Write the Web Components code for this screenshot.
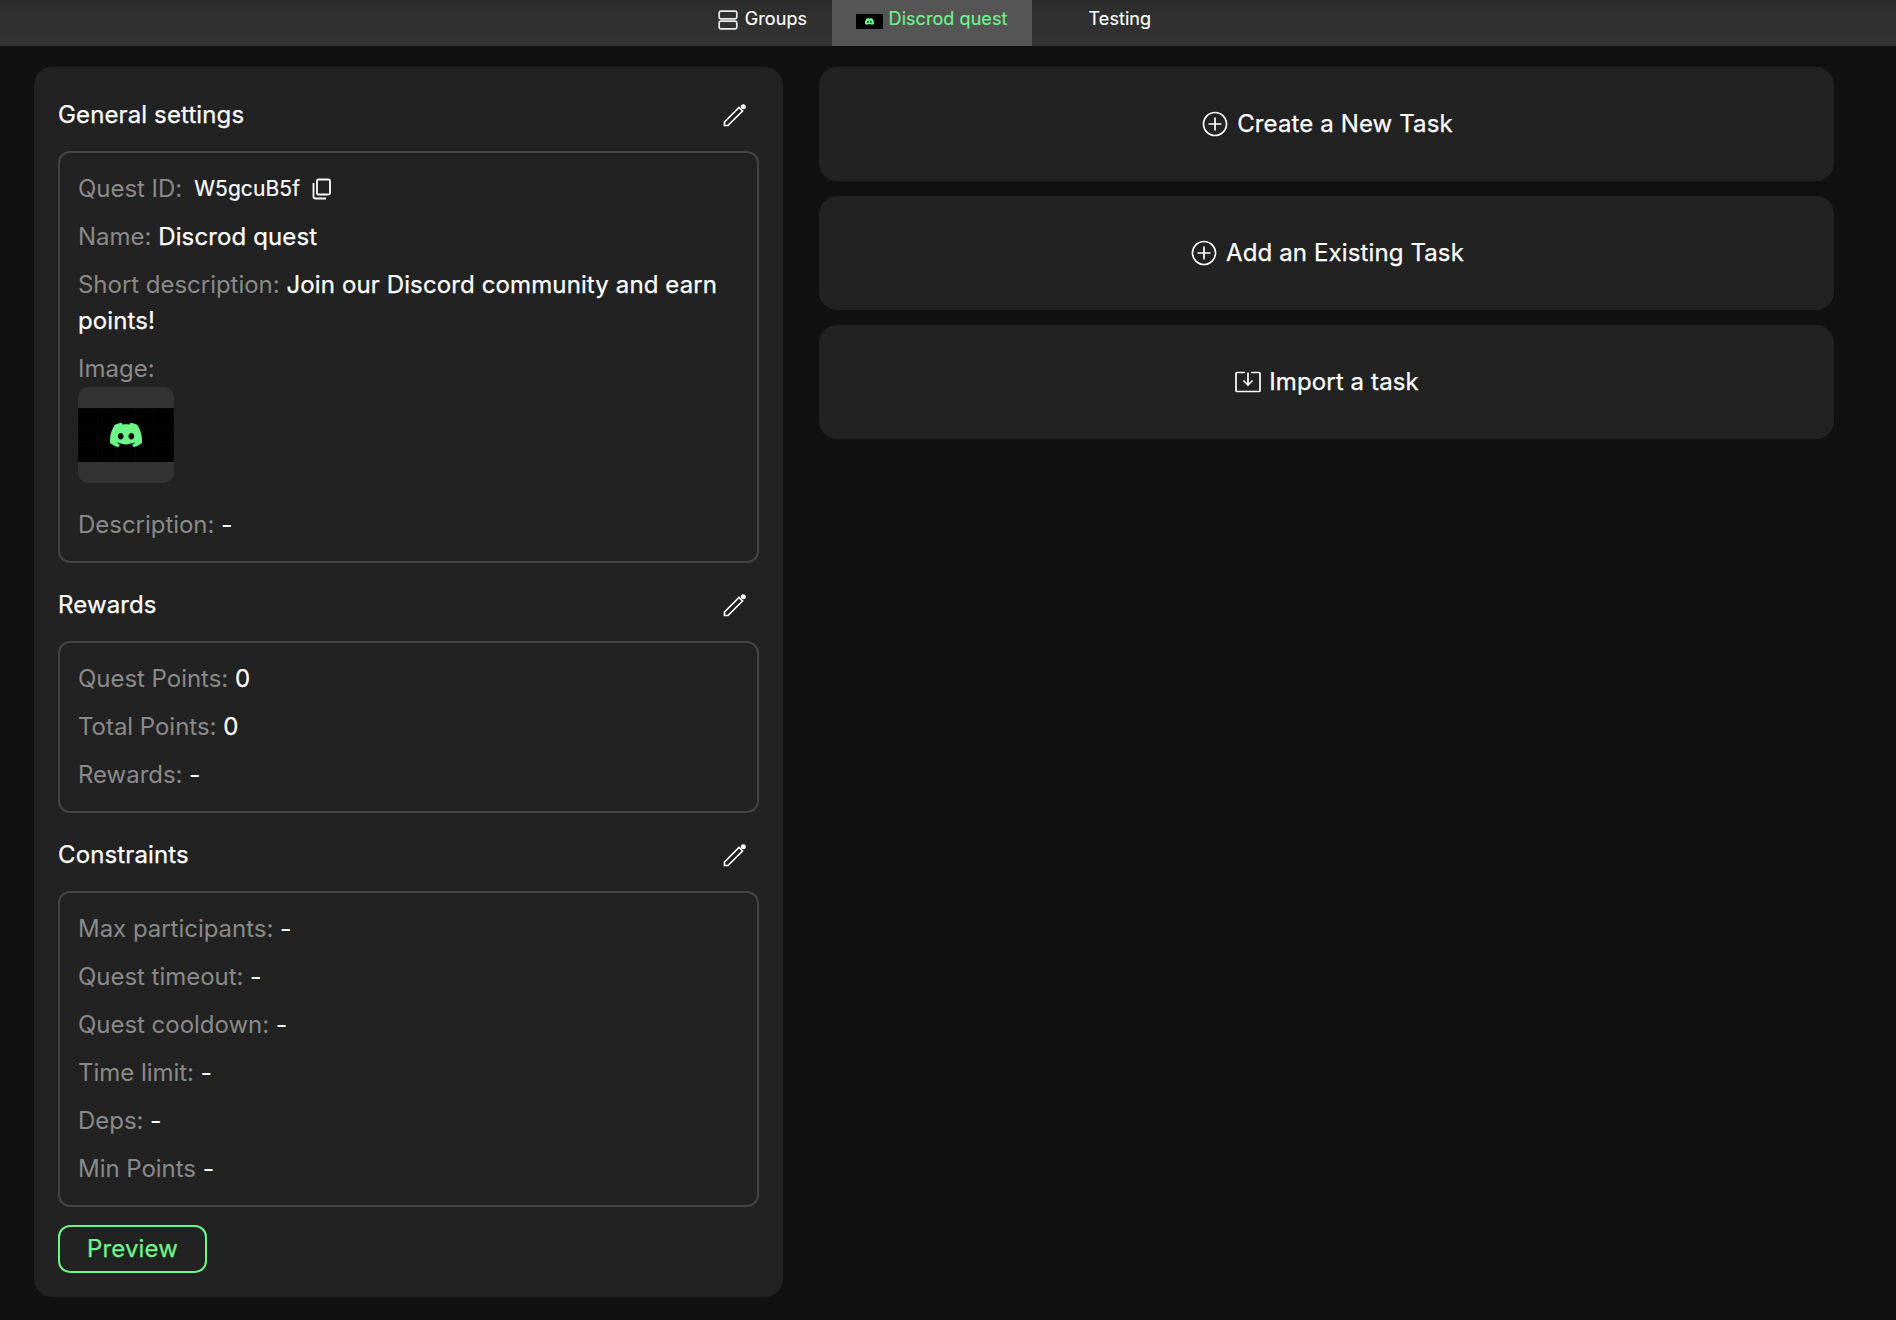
<!doctype html>
<html lang="en"><head><meta charset="utf-8"><title>Discrod quest</title>
<style>
html,body{margin:0;padding:0;height:100%;background:#111;}
body{font-family:Inter,"Liberation Sans",sans-serif;color:#fff;overflow:hidden;}
</style></head><body>
<template id="discord"><svg viewBox="0 0 24 24" width="100%" height="100%" fill="#6ef58a" style="display:block"><path d="M20.317 4.3698a19.7913 19.7913 0 00-4.8851-1.5152.0741.0741 0 00-.0785.0371c-.211.3753-.4447.8648-.6083 1.2495-1.8447-.2762-3.68-.2762-5.4868 0-.1636-.3933-.4058-.8742-.6177-1.2495a.077.077 0 00-.0785-.037 19.7363 19.7363 0 00-4.8852 1.515.0699.0699 0 00-.0321.0277C.5334 9.0458-.319 13.5799.0992 18.0578a.0824.0824 0 00.0312.0561c2.0528 1.5076 4.0413 2.4228 5.9929 3.0294a.0777.0777 0 00.0842-.0276c.4616-.6304.8731-1.2952 1.226-1.9942a.076.076 0 00-.0416-.1057c-.6528-.2476-1.2743-.5495-1.8722-.8923a.077.077 0 01-.0076-.1277c.1258-.0943.2517-.1923.3718-.2914a.0743.0743 0 01.0776-.0105c3.9278 1.7933 8.18 1.7933 12.0614 0a.0739.0739 0 01.0785.0095c.1202.099.246.1981.3728.2924a.077.077 0 01-.0066.1276 12.2986 12.2986 0 01-1.873.8914.0766.0766 0 00-.0407.1067c.3604.698.7719 1.3628 1.225 1.9932a.076.076 0 00.0842.0286c1.961-.6067 3.9495-1.5219 6.0023-3.0294a.077.077 0 00.0313-.0552c.5004-5.177-.8382-9.6739-3.5485-13.6604a.061.061 0 00-.0312-.0286zM8.02 15.3312c-1.1825 0-2.1569-1.0857-2.1569-2.419 0-1.3332.9555-2.4189 2.157-2.4189 1.2108 0 2.1757 1.0952 2.1568 2.419 0 1.3332-.9555 2.4189-2.1569 2.4189zm7.9748 0c-1.1825 0-2.1569-1.0857-2.1569-2.419 0-1.3332.9554-2.4189 2.1569-2.4189 1.2108 0 2.1757 1.0952 2.1568 2.419 0 1.3332-.946 2.4189-2.1568 2.4189Z"/></svg></template>

<quest-page>
  <quest-topbar slot="top">
    <quest-tab icon="groups">Groups</quest-tab>
    <quest-tab icon="logo" active>Discrod quest</quest-tab>
    <quest-tab icon="blank">Testing</quest-tab>
  </quest-topbar>
  <quest-panel slot="left">
    <quest-section title="General settings">
      <quest-row label="Quest ID:" kind="id"><span>W5gcuB5f</span></quest-row>
      <quest-row label="Name:">Discrod quest</quest-row>
      <quest-row label="Short description:">Join our Discord community and earn points!</quest-row>
      <quest-row label="Image:" kind="image"></quest-row>
      <quest-row label="Description:">-</quest-row>
    </quest-section>
    <quest-section title="Rewards">
      <quest-row label="Quest Points:">0</quest-row>
      <quest-row label="Total Points:">0</quest-row>
      <quest-row label="Rewards:">-</quest-row>
    </quest-section>
    <quest-section title="Constraints">
      <quest-row label="Max participants:">-</quest-row>
      <quest-row label="Quest timeout:">-</quest-row>
      <quest-row label="Quest cooldown:">-</quest-row>
      <quest-row label="Time limit:">-</quest-row>
      <quest-row label="Deps:">-</quest-row>
      <quest-row label="Min Points">-</quest-row>
    </quest-section>
    <quest-button>Preview</quest-button>
  </quest-panel>
  <quest-action slot="right" icon="plus">Create a New Task</quest-action>
  <quest-action slot="right" icon="plus">Add an Existing Task</quest-action>
  <quest-action slot="right" icon="import">Import a task</quest-action>
</quest-page>

<script>
const logo = () => document.getElementById('discord').innerHTML;
function def(name, html){
  customElements.define(name, class extends HTMLElement{
    constructor(){super();this.attachShadow({mode:'open'});}
    connectedCallback(){
      this.shadowRoot.innerHTML = typeof html==='function'?html(this):html;
    }
  });
}
def('quest-page',`<style>
:host{display:flex;flex-direction:column;width:1896px;height:1320px;background:#111}
.main{display:flex;gap:36px;padding:21px 62px 23px 34px;flex:1;min-height:0;align-items:flex-start}
.l{display:block;width:749px;flex:none}
.r{flex:1;display:flex;flex-direction:column;gap:15px;min-width:0}
</style><slot name="top"></slot><div class="main"><div class="l"><slot name="left"></slot></div><div class="r"><slot name="right"></slot></div></div>`);
def('quest-topbar',`<style>
:host{display:flex;justify-content:center;height:46px;padding-right:26px;background:linear-gradient(#2c2c2c,#343434);flex:none}
</style><slot></slot>`);
const tabIcons={
 groups:`<svg width="20" height="20" viewBox="0 0 20 20" fill="none" stroke="#fff" stroke-opacity=".9" stroke-width="1.7"><rect x="1.2" y="1.2" width="17.6" height="7.6" rx="1.6"/><rect x="1.2" y="11.2" width="17.6" height="7.6" rx="1.6"/></svg>`,
 logo:()=>`<div style="width:27px;height:15px;background:#000;display:flex;align-items:center;justify-content:center"><div style="width:9px;height:9px">${logo()}</div></div>`,
 blank:`<div style="width:26px;height:15px"></div>`
};
def('quest-tab',h=>{
 const ic=tabIcons[h.getAttribute('icon')];
 return `<style>
:host{display:flex;align-items:center;gap:7px;padding:0 24px;height:46px;font-size:18px;line-height:24px;color:#fff;font-weight:400;letter-spacing:.06px;-webkit-text-stroke:.15px currentColor}
:host([icon=groups]){gap:7px;padding:0 25px 0 23px}
:host([icon=groups]) .i{top:-3px}
:host([active]){background:#555;color:#6ef58a;gap:6px;padding:0 24.7px 0 23.5px}
:host([icon=blank]){gap:6.5px}
.t{position:relative;top:-4px}
.i{position:relative;top:-1.5px}
svg{display:block}
</style><div class="i">${typeof ic==='function'?ic():ic}</div><span class="t"><slot></slot></span>`;});
def('quest-panel',`<style>
:host{display:flex;flex-direction:column;background:#222;border-radius:18px;padding:24px;height:1230px;box-sizing:border-box}
</style><slot></slot>`);
def('quest-section',h=>`<style>
:host{display:block;margin-bottom:18px}
.h{display:flex;align-items:center;justify-content:space-between;height:48px;margin-bottom:12px;font-size:24px;line-height:36px;font-weight:400;letter-spacing:.12px;-webkit-text-stroke:.25px #fff}
.box{display:flex;flex-direction:column;gap:12px;border:2px solid #444;border-radius:12px;padding:18px}
svg{display:block;margin-right:12px}
</style><div class="h"><span>${h.getAttribute('title')}</span><svg width="24" height="24" viewBox="0 0 24 24" fill="none" stroke="#fff" stroke-width="1.700"><path d="M1.500 22.500V19L16 4.500l3.500 3.500L5 22.500z"/><circle cx="20.300" cy="3.700" r="2.500" fill="#fff" stroke="none"/></svg></div><div class="box"><slot></slot></div>`);
def('quest-row',h=>{
 const k=h.getAttribute('kind');
 if(k==='id') return `<style>:host{display:flex;align-items:center;height:36px;font-size:24px;line-height:36px}
 .l{color:#8a8a8a;margin-right:12px;letter-spacing:-.03px}.v{font-size:21px;color:#fff;font-weight:400;letter-spacing:.1px;-webkit-text-stroke:.2px #fff}
 svg{display:block;margin-left:12px}</style><span class="l">${h.getAttribute('label')}</span><span class="v"><slot></slot></span><svg width="20" height="22" viewBox="0 0 20 22" fill="none" stroke="#fff" stroke-width="1.800"><rect x="5" y="1.500" width="13" height="15" rx="1.500"/><path d="M1.500 5v13.500A2 2 0 0 0 3.500 20.500H14"/></svg>`;
 if(k==='image') return `<style>:host{display:block;font-size:24px;line-height:36px;margin-bottom:12px}
 .l{color:#8a8a8a}.th{width:96px;height:96px;border-radius:10px;background:#333;display:flex;align-items:center;overflow:hidden}
 .im{width:96px;height:54px;background:#000;background-image:linear-gradient(#070707 1px,transparent 1px),linear-gradient(90deg,#070707 1px,transparent 1px);background-size:19px 19px;display:flex;align-items:center;justify-content:center}
 .ic{width:32px;height:32px}</style><div class="l">${h.getAttribute('label')}</div><div class="th"><div class="im"><div class="ic">${logo()}</div></div></div>`;
 return `<style>:host{display:block;font-size:24px;line-height:36px;font-weight:400;letter-spacing:.12px;color:#fff;-webkit-text-stroke:.25px #fff}.l{color:#8a8a8a;letter-spacing:-.03px;-webkit-text-stroke:0}</style><span class="l">${h.getAttribute('label')}</span> <slot></slot>`;
});
def('quest-button',`<style>
:host{display:inline-flex;align-self:flex-start;align-items:center;justify-content:center;height:48px;width:149px;box-sizing:border-box;border:2px solid #6ef58a;border-radius:12px;color:#6ef58a;font-size:24px;font-weight:400;letter-spacing:.12px;padding-bottom:2px;-webkit-text-stroke:.25px #6ef58a}
</style><slot></slot>`);
const actIcons={
 plus:`<svg width="26" height="26" viewBox="0 0 26 26" fill="none" stroke="#fff" stroke-width="1.700"><circle cx="13" cy="13" r="11.500"/><path d="M13 6.500v13M6.500 13h13"/></svg>`,
 import:`<svg width="26" height="22" viewBox="0 0 26 22" fill="none" stroke="#fff" stroke-width="1.700"><path d="M10 1.500H2a1 1 0 0 0-1 1v17a1 1 0 0 0 1 1h22a1 1 0 0 0 1-1v-17a1 1 0 0 0-1-1h-8"/><path d="M13 1.500V14M8.500 9.500l4.500 4.500 4.500-4.500"/></svg>`
};
def('quest-action',h=>`<style>
:host{display:flex;align-items:center;justify-content:center;gap:9px;padding-left:2px;height:114px;background:#222;border-radius:18px;font-size:24px;font-weight:400;letter-spacing:.12px;color:#fff;-webkit-text-stroke:.25px #fff}
:host([icon=import]){gap:8px;padding-left:1px}
svg{display:block}
span{position:relative;top:-1px}
</style>${actIcons[h.getAttribute('icon')]}<span><slot></slot></span>`);
</script>
</body></html>
